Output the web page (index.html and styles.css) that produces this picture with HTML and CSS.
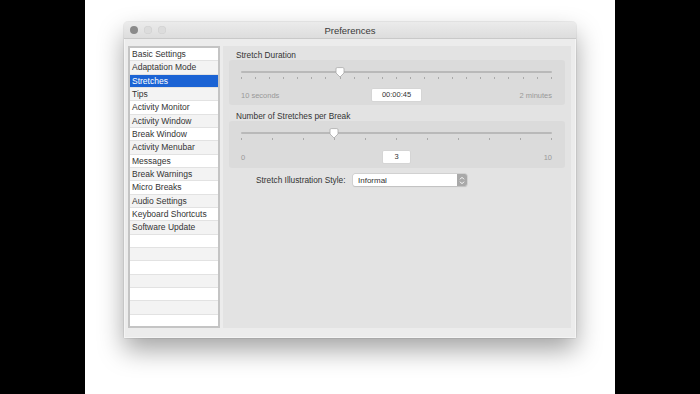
FILE: index.html
```
<!DOCTYPE html>
<html lang="en">
<head>
    <meta charset="UTF-8">
    <title>Preferences</title>
    <link rel="stylesheet" href="styles.css">
</head>
<body>
<div class="screen">
    <div class="window">
        <div class="titlebar">
            <div class="lights">
                <span class="light active"></span>
                <span class="light"></span>
                <span class="light"></span>
            </div>
            <div class="title">Preferences</div>
        </div>
        <div class="window-body">
            <ul class="sidebar">
                <li>Basic Settings</li>
                <li>Adaptation Mode</li>
                <li class="selected">Stretches</li>
                <li>Tips</li>
                <li>Activity Monitor</li>
                <li>Activity Window</li>
                <li>Break Window</li>
                <li>Activity Menubar</li>
                <li>Messages</li>
                <li>Break Warnings</li>
                <li>Micro Breaks</li>
                <li>Audio Settings</li>
                <li>Keyboard Shortcuts</li>
                <li>Software Update</li>
                <li></li>
                <li></li>
                <li></li>
                <li></li>
                <li></li>
                <li></li>
                <li></li>
            </ul>
            <div class="pane">
                <div class="group-label">Stretch Duration</div>
                <div class="group duration">
                    <div class="slider">
                        <div class="track"></div>
                        <div class="ticks">
                            <i></i><i></i><i></i><i></i><i></i><i></i><i></i><i></i>
                            <i></i><i></i><i></i><i></i><i></i><i></i><i></i><i></i>
                            <i></i><i></i><i></i><i></i><i></i><i></i><i></i>
                        </div>
                        <svg class="thumb" style="left: 31.8%" width="10" height="11" viewBox="0 0 10 11">
                            <path d="M1 1.8 Q1 0.6 2.2 0.6 H7.8 Q9 0.6 9 1.8 V6 L5 10 L1 6 Z" fill="#fff" stroke="#a8a8a8" stroke-width="0.8"/>
                        </svg>
                    </div>
                    <div class="scale">
                        <span class="scale-end">10 seconds</span>
                        <span class="field wide">00:00:45</span>
                        <span class="scale-end">2 minutes</span>
                    </div>
                </div>

                <div class="group-label">Number of Stretches per Break</div>
                <div class="group count">
                    <div class="slider">
                        <div class="track"></div>
                        <div class="ticks">
                            <i></i><i></i><i></i><i></i><i></i><i></i>
                            <i></i><i></i><i></i><i></i><i></i>
                        </div>
                        <svg class="thumb" style="left: 30%" width="10" height="11" viewBox="0 0 10 11">
                            <path d="M1 1.8 Q1 0.6 2.2 0.6 H7.8 Q9 0.6 9 1.8 V6 L5 10 L1 6 Z" fill="#fff" stroke="#a8a8a8" stroke-width="0.8"/>
                        </svg>
                    </div>
                    <div class="scale">
                        <span class="scale-end">0</span>
                        <span class="field narrow">3</span>
                        <span class="scale-end">10</span>
                    </div>
                </div>

                <div class="style-row">
                    <span class="style-label">Stretch Illustration Style:</span>
                    <div class="popup">
                        <span class="popup-value">Informal</span>
                        <span class="stepper">
                            <svg width="6" height="9" viewBox="0 0 6 9">
                                <path d="M1 3.3 L3 1.3 L5 3.3 M1 5.7 L3 7.7 L5 5.7" fill="none" stroke="#fff" stroke-width="1"/>
                            </svg>
                        </span>
                    </div>
                </div>
            </div>
        </div>
    </div>
</div>
</body>
</html>
```

FILE: styles.css
```
body {
    margin: 0;
    background-color: #000;
    font-family: 'Liberation Sans', Arial, sans-serif;
    color: #2f2f2f;
}

.screen {
    width: 530px;
    height: 394px;
    margin: 0 auto;
    background-color: #fff;
    padding: 22px 0 0 39px;
    box-sizing: border-box;
    overflow: hidden;
}

.window {
    width: 452px;
    height: 316px;
    background-color: #ececec;
    border-radius: 4px 4px 2px 2px;
    box-shadow: 0 12px 26px rgba(0, 0, 0, 0.36), 0 0 0 1px rgba(0, 0, 0, 0.06);
    display: flex;
    flex-direction: column;
}

.titlebar {
    flex-shrink: 0;
    height: 16px;
    background: linear-gradient(#ebebeb, #dddddd);
    border-bottom: 1px solid #c9c9c9;
    border-radius: 4px 4px 0 0;
    display: flex;
    align-items: center;
    position: relative;
}

.lights {
    display: flex;
    gap: 6px;
    padding-left: 6px;
}

.light {
    width: 8px;
    height: 8px;
    border-radius: 50%;
    background-color: #dcdcdc;
    box-shadow: inset 0 0 0 0.5px #cfcfcf;
}

.light.active {
    background-color: #8a8a8a;
    box-shadow: none;
}

.title {
    position: absolute;
    left: 0;
    right: 0;
    text-align: center;
    font-size: 9.5px;
    color: #3a3a3a;
}

.window-body {
    flex: 1;
    min-height: 0;
    display: flex;
    gap: 3px;
    padding: 7px 4px 9px 3px;
    border: 1px solid #f4f4f4;
    border-top: none;
    overflow: hidden;
}

.sidebar {
    list-style: none;
    margin: 0;
    padding: 0;
    width: 88px;
    border: 2px solid #c4c4c4;
    background-color: #fff;
    display: flex;
    flex-direction: column;
    overflow: hidden;
}

.sidebar li {
    flex-shrink: 0;
    height: 13.33px;
    line-height: 13.33px;
    font-size: 8.5px;
    padding-left: 2px;
    color: #333;
    border-bottom: 0.6px solid #e2e2e2;
    box-sizing: border-box;
}

.sidebar li:nth-child(even) {
    background-color: #f3f3f3;
}

.sidebar li.selected {
    background-color: #1b63d4;
    color: #fff;
}

.pane {
    flex: 1;
    background-color: #e3e3e3;
    padding: 4px 6px 0 6px;
    display: flex;
    flex-direction: column;
}

.group-label {
    font-size: 8.3px;
    line-height: 10px;
    height: 10px;
    padding-left: 7px;
    color: #333;
}

.group {
    background-color: #dbdbdb;
    border-radius: 3px;
    padding: 7px 13px 0 12px;
    margin-bottom: 6px;
    box-sizing: border-box;
}

.group.duration {
    height: 45px;
}

.group.count {
    height: 47px;
}

.slider {
    position: relative;
    height: 10px;
    padding-top: 4px;
}

.track {
    height: 2px;
    background-color: #b9b9b9;
    border-radius: 1px;
}

.ticks {
    display: flex;
    justify-content: space-between;
    margin-top: 4px;
}

.ticks i {
    width: 1px;
    height: 2px;
    background-color: #a9a9a9;
}

.thumb {
    position: absolute;
    top: 0;
    margin-left: -5px;
}

.scale {
    display: flex;
    justify-content: space-between;
    align-items: center;
    height: 12px;
    padding-top: 8px;
}

.group.count .scale {
    padding-top: 9px;
}

.scale-end {
    font-size: 7.5px;
    color: #999;
    width: 60px;
}

.scale-end:last-child {
    text-align: right;
}

.field {
    background-color: #fff;
    height: 12px;
    line-height: 12px;
    font-size: 7.5px;
    text-align: center;
    color: #333;
    border-radius: 1px;
    box-shadow: 0 0 0 0.5px #cfcfcf;
}

.field.wide {
    width: 49px;
}

.field.narrow {
    width: 27px;
}

.style-row {
    display: flex;
    align-items: center;
    padding-left: 27px;
}

.style-label {
    font-size: 8.3px;
    width: 97px;
    color: #333;
}

.popup {
    width: 114px;
    height: 12px;
    background-color: #fff;
    border-radius: 2px;
    box-shadow: 0 0 0 0.5px #c2c2c2, 0 0.5px 1px rgba(0, 0, 0, 0.15);
    display: flex;
    align-items: center;
    justify-content: space-between;
}

.popup-value {
    font-size: 8px;
    padding-left: 5px;
    color: #333;
}

.stepper {
    width: 10px;
    height: 12px;
    background-color: #a9a9a9;
    border-radius: 0 2px 2px 0;
    display: flex;
    align-items: center;
    justify-content: center;
}
```
